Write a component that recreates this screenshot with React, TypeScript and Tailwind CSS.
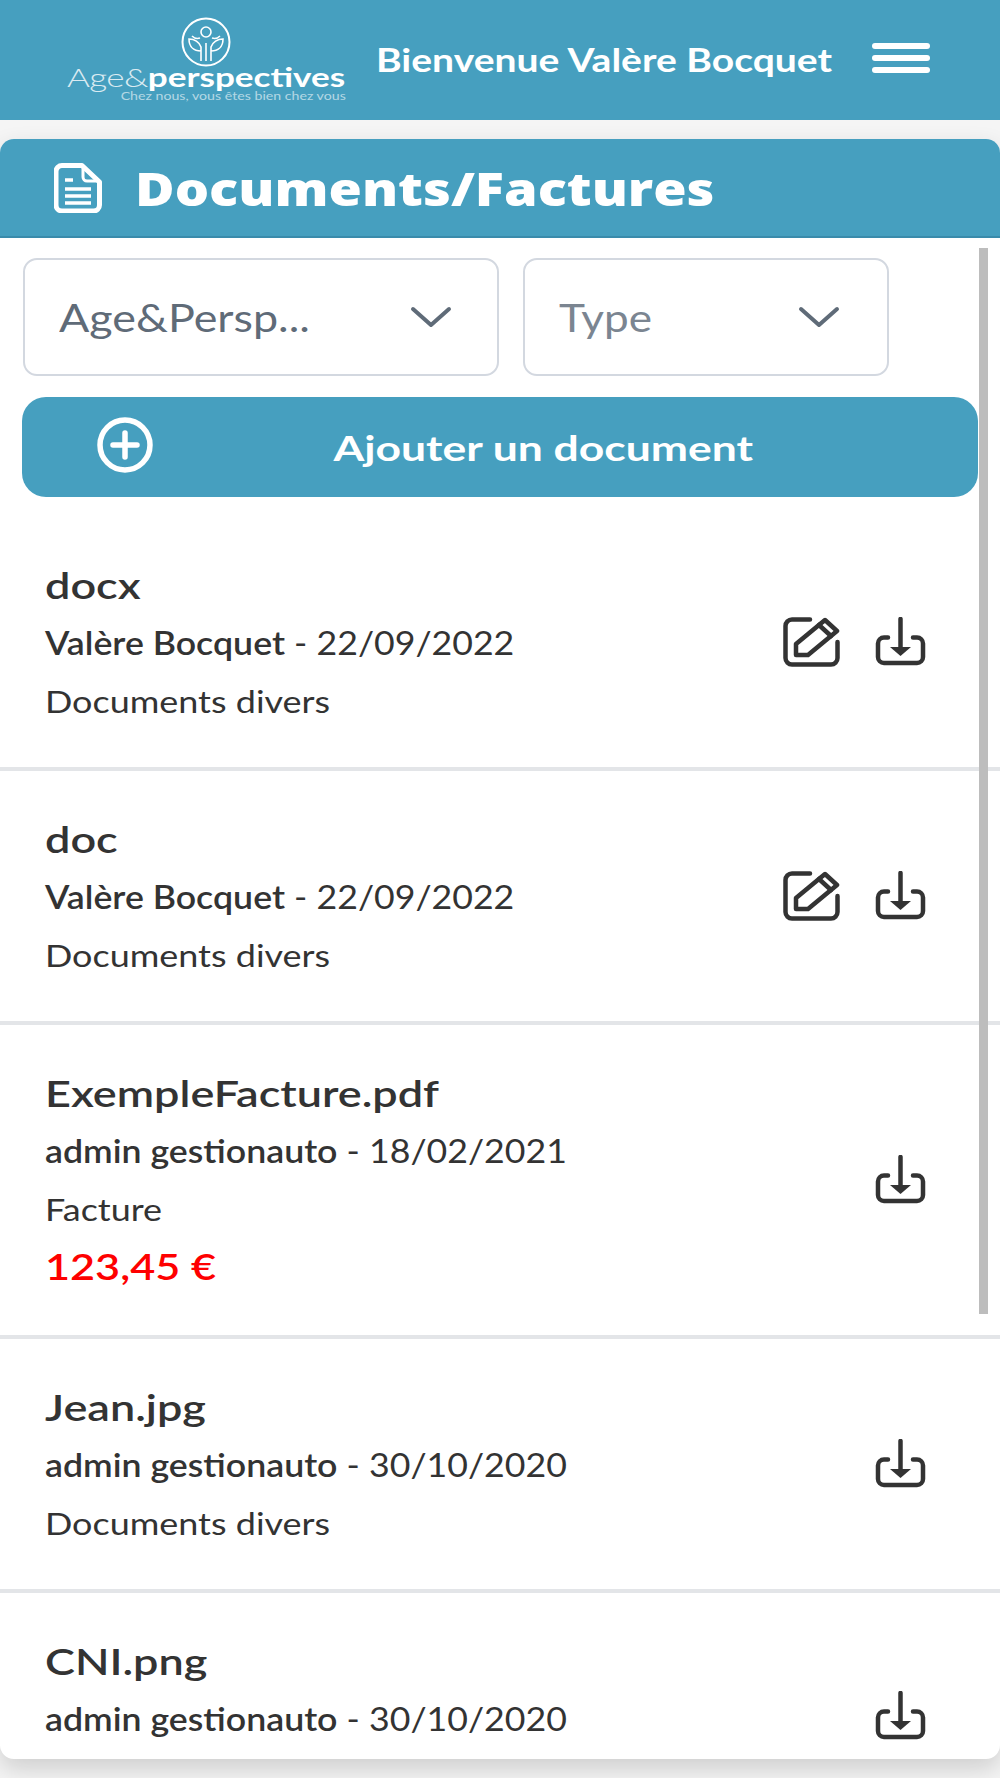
import React from "react";

const lato = "font-['Lato','Liberation_Sans',sans-serif]";

const documents = [
  { name: "docx", author: "Valère Bocquet", date: "22/09/2022", type: "Documents divers", editable: true },
  { name: "doc", author: "Valère Bocquet", date: "22/09/2022", type: "Documents divers", editable: true },
  { name: "ExempleFacture.pdf", author: "admin gestionauto", date: "18/02/2021", type: "Facture", amount: "123,45 €" },
  { name: "Jean.jpg", author: "admin gestionauto", date: "30/10/2020", type: "Documents divers" },
  { name: "CNI.png", author: "admin gestionauto", date: "30/10/2020" },
];

const EditIcon = () => (
  <svg width="57" height="50" viewBox="0 0 57 50" fill="none" stroke="#333" strokeWidth="4.5" strokeLinejoin="round" strokeLinecap="round">
    <path d="M27 2.5H9a6.5 6.5 0 0 0-6.5 6.5v32A6.5 6.5 0 0 0 9 47.500h39a6.500 6.500 0 0 0 6.500-6.500V25" />
    <path d="M13 27 42 3l12 11-29 24H13z" />
    <path d="m36 8 12 11" />
  </svg>
);

const DownloadIcon = () => (
  <svg width="51" height="50" viewBox="0 0 51 50" fill="none" stroke="#333" strokeWidth="4.5" strokeLinecap="round">
    <path d="M13 20.500H9a6 6 0 0 0-6 6V40a6 6 0 0 0 6 6h33a6 6 0 0 0 6-6V26.500a6 6 0 0 0-6-6h-4" />
    <path d="M25.500 2v30" />
    <path d="M15 30h21L25.500 39z" fill="#333" stroke="none" />
  </svg>
);

const Chevron = () => (
  <svg width="42" height="22" viewBox="0 0 42 22" fill="none" stroke="#5f6b78" strokeWidth="4" strokeLinecap="round" strokeLinejoin="round">
    <path d="m3 3 18 16L39 3" />
  </svg>
);

const Logo = () => (
  <div className="flex flex-col items-center w-[280px] shrink-0 pt-[17px]">
    <svg width="52" height="50" viewBox="0 0 52 50" fill="none" stroke="white" strokeWidth="1.600">
      <circle cx="26" cy="25" r="23.500" strokeWidth="2" />
      <circle cx="26" cy="15" r="5" />
      <path d="M26 44V26M21 44V30c-2-5-6-8-12-8 0 8 5 12 12 12M31 44V30c2-5 6-8 12-8 0 8-5 12-12 12M20 21c-3 1-6 0-8-2M32 21c3 1 6 0 8-2" />
    </svg>
    <div className="flex items-baseline h-[22px] leading-[22px] text-white text-[26px] -mt-[1px] whitespace-nowrap scale-x-[1.35]">
      <span className="font-light opacity-80 tracking-[-0.5px]">Age&amp;</span>
      <span className="font-bold">perspectives</span>
    </div>
    <div className="self-end h-[12px] text-[12px] leading-[12px] text-white/60 whitespace-nowrap origin-right scale-x-[1.18] mt-[2px]">
      Chez nous, vous êtes bien chez vous
    </div>
  </div>
);

const Row = ({ doc, last }: { doc: (typeof documents)[number]; last: boolean }) => (
  <div className={last ? "flex items-start pt-[39px] h-[169px] pl-[45px]" : "flex items-center pt-[39px] pb-[37px] pl-[45px] border-b-4 border-[#e3e5e8]"}>
    <div className="flex-1 text-[#333]">
      <div className="h-[58px] leading-[58px] text-[36px] font-semibold origin-left scale-x-[1.25]">{doc.name}</div>
      <div className="h-[58px] leading-[58px] text-[32px] origin-left scale-x-[1.115] whitespace-nowrap">
        <span className="font-semibold">{doc.author}</span> - {doc.date}
      </div>
      {doc.type && <div className="h-[58px] leading-[58px] text-[31px] origin-left scale-x-[1.16]">{doc.type}</div>}
      {doc.amount && <div className="h-[60px] leading-[56px] text-[36px] font-semibold text-[#fe0000] origin-left scale-x-[1.2]">{doc.amount}</div>}
    </div>
    <div className={last ? "flex items-center gap-[35px] w-[142px] justify-end pr-[74px] pt-[59px]" : "flex items-center gap-[35px] w-[242px] justify-end pr-[74px] -mt-[3px]"}>
      {doc.editable && <EditIcon />}
      <DownloadIcon />
    </div>
  </div>
);

export default function App() {
  return (
    <div className={`${lato} bg-[#f5f5f5] h-[1778px] w-[1000px] overflow-hidden`}>
      <header className="flex items-start h-[120px] bg-[#469fbf] pl-[66px]">
        <Logo />
        <div className="w-[458px] ml-[30px] pt-[38px] text-white font-bold text-[32px] leading-[44px] whitespace-nowrap origin-left scale-x-[1.22]">
          Bienvenue Valère Bocquet
        </div>
        <div className="ml-[38px] mt-[43px] flex flex-col gap-[6px] w-[58px] shrink-0">
          <span className="h-[6px] bg-white rounded-sm" />
          <span className="h-[6px] bg-white rounded-sm" />
          <span className="h-[6px] bg-white rounded-sm" />
        </div>
      </header>

      <main className="relative mt-[19px] h-[1620px] bg-white rounded-[14px] shadow-[0_10px_24px_rgba(0,0,0,0.16)] overflow-hidden">
        <div className="flex items-center h-[99px] bg-[#469fbf] border-b-2 border-[#3a8bab] pl-[54px] gap-[33px]">
          <svg width="48" height="50" viewBox="0 0 48 50" fill="none" stroke="white" strokeWidth="5" strokeLinejoin="round">
            <path d="M8 2.500h20L45.500 19v23a6 6 0 0 1-6 6H8a6 6 0 0 1-6-6V8.500a6 6 0 0 1 6-6z" />
            <path d="M29 3v11a4 4 0 0 0 4 4h12" strokeWidth="3" />
            <path d="M11 17h8M11 26h26M11 33h26M11 40h26" strokeWidth="3.500" />
          </svg>
          <h1 className="font-['Open_Sans',sans-serif] text-white font-extrabold text-[46px] leading-none origin-left scale-x-[1.175] whitespace-nowrap">Documents/Factures</h1>
        </div>

        <div className="flex gap-[24px] pl-[23px] pt-[20px]">
          <div className="flex items-center justify-between w-[476px] h-[118px] bg-white border-2 border-[#d3d8e0] rounded-[14px] pl-[34px] pr-[45px] text-[38px] text-[#5f6b78]">
            <span className="origin-left scale-x-[1.18]">Age&amp;Persp...</span>
            <Chevron />
          </div>
          <div className="flex items-center justify-between w-[366px] h-[118px] bg-white border-2 border-[#d3d8e0] rounded-[14px] pl-[34px] pr-[47px] text-[38px] text-[#7b8591]">
            <span className="origin-left scale-x-[1.16]">Type</span>
            <Chevron />
          </div>
        </div>

        <div className="relative flex items-center justify-center ml-[22px] mt-[21px] w-[956px] h-[100px] bg-[#469fbf] rounded-[24px] pl-[86px] text-white font-bold text-[35px]">
          <svg className="absolute left-[74px] top-[20px]" width="58" height="56" viewBox="0 0 58 56" fill="none" stroke="white" strokeWidth="5.500" strokeLinecap="round">
            <circle cx="29" cy="28" r="25" />
            <path d="M29 16v24M17 28h24" />
          </svg>
          <span className="scale-x-[1.27] whitespace-nowrap">Ajouter un document</span>
        </div>

        <div className="mt-[20px]">
          {documents.map((doc, i) => (
            <Row key={doc.name} doc={doc} last={i === documents.length - 1} />
          ))}
        </div>

        <div className="absolute left-[979px] top-[109px] w-[9px] h-[1066px] bg-[#bdbdbd]" />
      </main>
    </div>
  );
}
